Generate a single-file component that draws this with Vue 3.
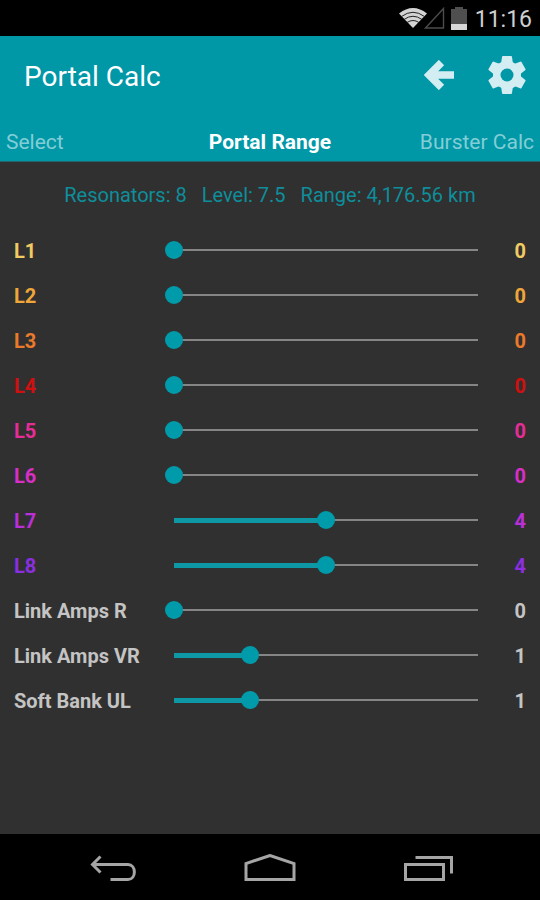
<script setup>
import { reactive } from 'vue'

const tabs = [
  { name: 'Select', place: 'start' },
  { name: 'Portal Range', place: 'current' },
  { name: 'Burster Calc', place: 'end' },
]

const summary = ['Resonators: 8', 'Level: 7.5', 'Range: 4,176.56 km']

const gearAngles = [0, 60, 120, 180, 240, 300]

const rows = reactive([
  { id: 'l1', label: 'L1', color: '#f0cb62', value: 0, max: 8 },
  { id: 'l2', label: 'L2', color: '#f0a638', value: 0, max: 8 },
  { id: 'l3', label: 'L3', color: '#ea7a2a', value: 0, max: 8 },
  { id: 'l4', label: 'L4', color: '#d01010', value: 0, max: 8 },
  { id: 'l5', label: 'L5', color: '#e62c96', value: 0, max: 8 },
  { id: 'l6', label: 'L6', color: '#d82ec6', value: 0, max: 8 },
  { id: 'l7', label: 'L7', color: '#b92fd8', value: 4, max: 8 },
  { id: 'l8', label: 'L8', color: '#8a2ee0', value: 4, max: 8 },
  { id: 'amp-r', label: 'Link Amps R', color: '#c4c4c4', value: 0, max: 4 },
  { id: 'amp-vr', label: 'Link Amps VR', color: '#c4c4c4', value: 1, max: 4 },
  { id: 'amp-ul', label: 'Soft Bank UL', color: '#c4c4c4', value: 1, max: 4 },
])
</script>

<template>
  <div class="screen">
    <div class="status">
      <svg class="wifi" viewBox="0 0 28 20" aria-hidden="true">
        <path d="M0 5.500Q14-5.500 28 5.500L14 20Z" fill="#d4d4d4" />
        <g fill="none" stroke="#222" stroke-width="1">
          <path d="M2.500 8.500Q14 0 25.500 8.500" />
          <path d="M5 11.500Q14 5 23 11.500" />
          <path d="M8 14.500Q14 10.500 20 14.500" />
        </g>
      </svg>
      <svg class="signal" viewBox="0 0 21 22" aria-hidden="true">
        <path d="M1.500 21L19.500 1.500V21Z" fill="none" stroke="#4c4c4c" stroke-width="1.400" />
      </svg>
      <svg class="battery" viewBox="0 0 16 23" aria-hidden="true">
        <path d="M4 0H12V2H16V23H0V2H4Z" fill="#4f4f4f" />
        <path d="M0 17H16V23H0Z" fill="#d6d6d6" />
      </svg>
      <span class="clock">11:16</span>
    </div>

    <header class="header">
      <div class="bar">
        <h1 class="title">Portal Calc</h1>
        <button class="action" type="button" aria-label="Back">
          <svg class="arrow" viewBox="0 0 30 30" fill="none" stroke="#d3eef2" stroke-width="7.500">
            <path d="M17.500 2.500L5 15L17.500 27.500M5 15H30" />
          </svg>
        </button>
        <button class="action" type="button" aria-label="Settings">
          <svg class="gear" viewBox="-19 -19 38 38" fill="#d3eef2">
            <circle r="14" />
            <path
              v-for="angle in gearAngles"
              :key="angle"
              d="M-5-18Q-5-19-4-19H4Q5-19 5-18L6-11H-6Z"
              :transform="`rotate(${angle})`"
            />
            <circle r="6.500" fill="#0097a7" />
          </svg>
        </button>
      </div>
      <nav class="tabs">
        <a v-for="tab in tabs" :key="tab.name" class="tab" :class="tab.place" href="#">{{ tab.name }}</a>
      </nav>
    </header>

    <main class="content">
      <div class="summary">
        <span v-for="item in summary" :key="item">{{ item }}</span>
      </div>
      <div v-for="row in rows" :key="row.id" class="row" :style="{ color: row.color }">
        <label class="label" :for="row.id">{{ row.label }}</label>
        <input
          :id="row.id"
          v-model.number="row.value"
          class="slider"
          type="range"
          min="0"
          :max="row.max"
          :style="{ '--share': row.value / row.max }"
        />
        <output class="value" :for="row.id">{{ row.value }}</output>
      </div>
    </main>

    <footer class="system">
      <button class="key" type="button" aria-label="System back">
        <svg viewBox="0 0 52 30" fill="none" stroke="#a5a5a5" stroke-width="3">
          <path d="M13.500 2.500L5.500 10.500L13.500 18.500M5.500 10.500H41C49.500 10.500 49.500 25.500 41 25.500H23.500" />
        </svg>
      </button>
      <button class="key" type="button" aria-label="Home">
        <svg viewBox="0 0 52 30" fill="none" stroke="#a5a5a5" stroke-width="3">
          <path d="M2 25.500V9.500L26 1.500L50 9.500V25.500Z" />
        </svg>
      </button>
      <button class="key" type="button" aria-label="Recent apps">
        <svg viewBox="0 0 52 30" fill="none" stroke="#a5a5a5" stroke-width="3">
          <path d="M4.500 10.500H42.500V25.500H4.500Z" />
          <path d="M14.500 3.500H50.500V19.500" />
        </svg>
      </button>
    </footer>
  </div>
</template>

<style>
body {
  margin: 0;
  background: #303030;
}
</style>

<style scoped>
.screen {
  display: flex;
  flex-direction: column;
  min-height: 100vh;
  background: #303030;
  font-family: Roboto, "Liberation Sans", sans-serif;
}

svg {
  display: block;
}

button {
  padding: 0;
  border: 0;
  background: none;
}

.status {
  display: flex;
  align-items: center;
  justify-content: flex-end;
  height: 36px;
  padding: 0 8px;
  box-sizing: border-box;
  background: #000;
}

.wifi {
  width: 28px;
  height: 20px;
}

.signal {
  width: 21px;
  height: 22px;
  margin-left: -3px;
}

.battery {
  width: 16px;
  height: 23px;
  margin-left: 6px;
}

.clock {
  margin-left: 8px;
  padding-top: 3px;
  color: #cfcfcf;
  font-size: 23px;
  line-height: 28px;
}

.header {
  background: #0097a7;
  border-bottom: 1px solid #23666e;
}

.bar {
  display: flex;
  align-items: center;
  gap: 34px;
  height: 78px;
  padding: 0 14px 0 24px;
}

.title {
  flex: 1;
  margin: 0;
  padding-top: 3px;
  color: #fff;
  font-size: 28px;
  font-weight: 400;
  line-height: 36px;
}

.arrow {
  width: 30px;
  height: 30px;
}

.gear {
  width: 38px;
  height: 38px;
}

.tabs {
  display: grid;
  grid-template-columns: 1fr auto 1fr;
  height: 47px;
  padding: 0 6px;
}

.tab {
  height: 47px;
  color: #83ced6;
  font-size: 21px;
  line-height: 56px;
  text-decoration: none;
}

.current {
  color: #fff;
  font-weight: 700;
}

.end {
  text-align: right;
}

.content {
  flex: 1;
}

.summary {
  display: flex;
  justify-content: center;
  gap: 15px;
  color: #0e8e9b;
  font-size: 20px;
  line-height: 66px;
}

.row {
  display: grid;
  grid-template-columns: 151px 1fr 39px;
  align-items: center;
  height: 45px;
  padding: 0 14px 1px;
  box-sizing: border-box;
  font-size: 20px;
  font-weight: 700;
  line-height: 24px;
}

.label,
.value {
  padding-top: 2px;
}

.value {
  text-align: right;
}

.slider {
  appearance: none;
  width: 100%;
  height: 18px;
  margin: 0;
  background: none;
}

.slider::-webkit-slider-runnable-track {
  height: 18px;
  background:
    linear-gradient(#0e97a5, #0e97a5) 9px 7px / calc((100% - 18px) * var(--share)) 5px no-repeat,
    linear-gradient(#858585, #858585) 9px 8px / calc(100% - 18px) 2px no-repeat;
}

.slider::-webkit-slider-thumb {
  appearance: none;
  width: 18px;
  height: 18px;
  border-radius: 50%;
  background: #009bab;
}

.system {
  display: grid;
  grid-template-columns: repeat(3, 1fr);
  height: 66px;
  padding: 4px 34px 0;
  box-sizing: border-box;
  background: #000;
}

.key {
  display: flex;
  align-items: center;
  justify-content: center;
}

.key svg {
  width: 52px;
  height: 30px;
}
</style>
